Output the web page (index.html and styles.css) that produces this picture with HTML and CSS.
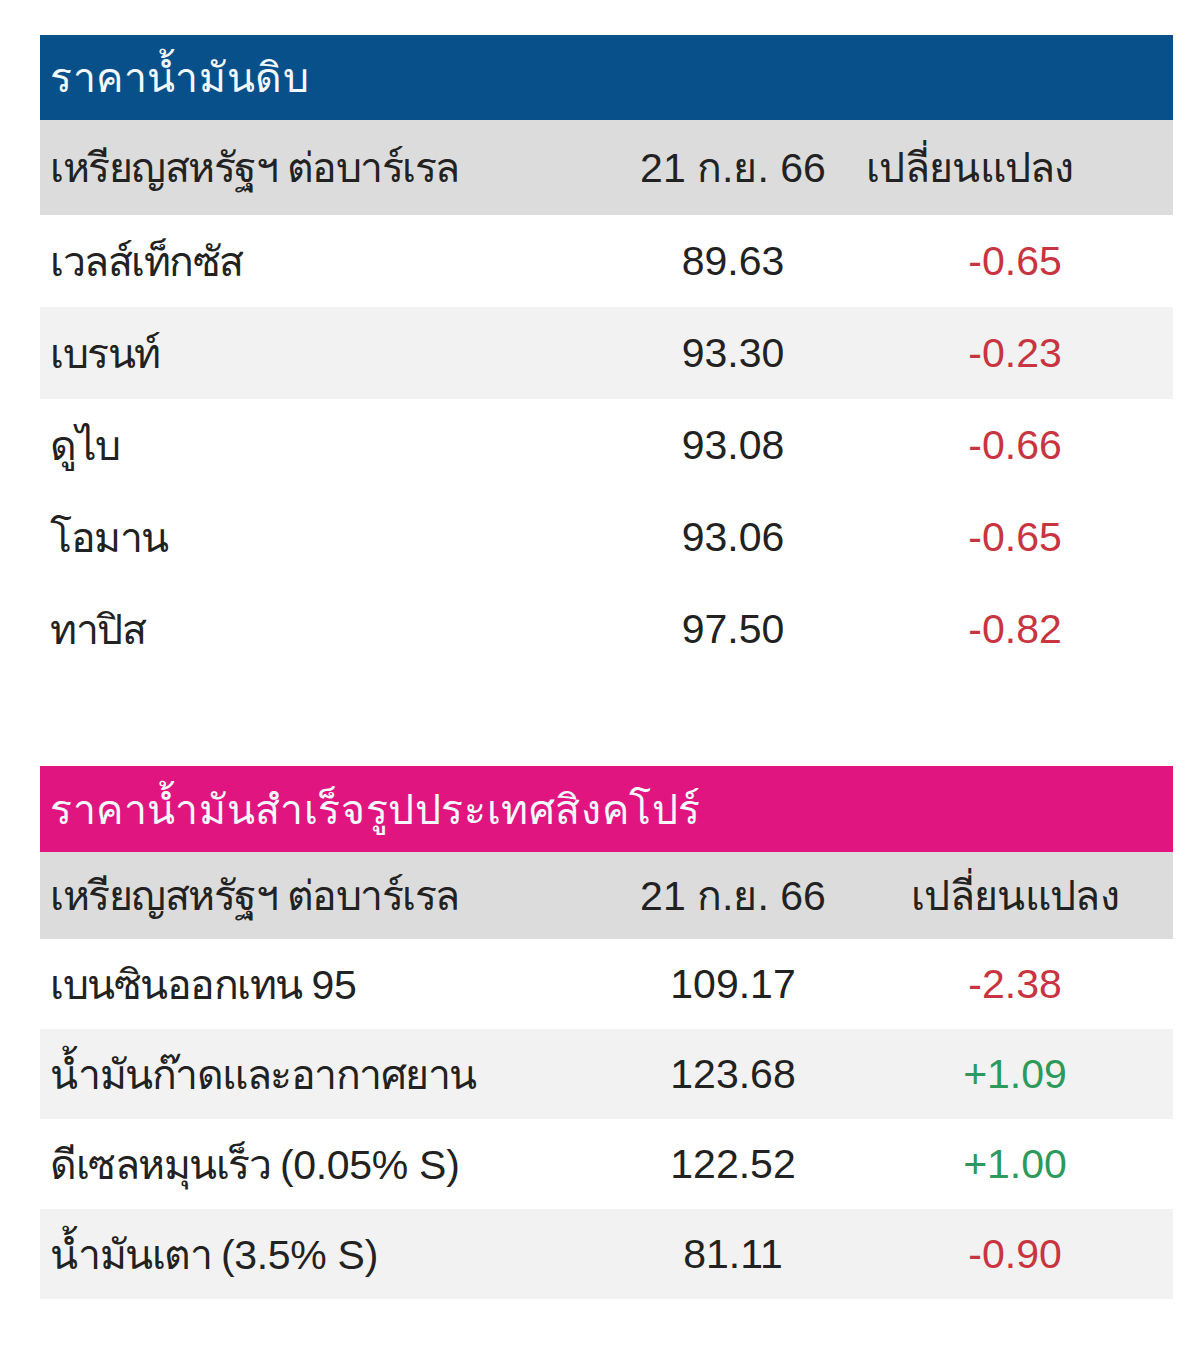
FILE: index.html
```html
<!DOCTYPE html>
<html lang="th">
<head>
<meta charset="utf-8">
<title>ราคาน้ำมัน</title>
<link rel="stylesheet" href="styles.css">
</head>
<body>
<div class="page">
  <table class="oil oil-crude">
    <colgroup><col class="c-name"><col class="c-date"><col class="c-chg"></colgroup>
    <thead>
      <tr class="title"><th colspan="3">ราคาน้ำมันดิบ</th></tr>
      <tr class="head"><th class="name">เหรียญสหรัฐฯ ต่อบาร์เรล</th><th class="date">21 ก.ย. 66</th><th class="chg chg-left">เปลี่ยนแปลง</th></tr>
    </thead>
    <tbody>
      <tr><td class="name">เวลส์เท็กซัส</td><td class="num">89.63</td><td class="chg down">-0.65</td></tr>
      <tr class="alt"><td class="name">เบรนท์</td><td class="num">93.30</td><td class="chg down">-0.23</td></tr>
      <tr><td class="name">ดูไบ</td><td class="num">93.08</td><td class="chg down">-0.66</td></tr>
      <tr><td class="name">โอมาน</td><td class="num">93.06</td><td class="chg down">-0.65</td></tr>
      <tr><td class="name">ทาปิส</td><td class="num">97.50</td><td class="chg down">-0.82</td></tr>
    </tbody>
  </table>

  <table class="oil oil-refined">
    <colgroup><col class="c-name"><col class="c-date"><col class="c-chg"></colgroup>
    <thead>
      <tr class="title"><th colspan="3">ราคาน้ำมันสำเร็จรูปประเทศสิงคโปร์</th></tr>
      <tr class="head"><th class="name">เหรียญสหรัฐฯ ต่อบาร์เรล</th><th class="date">21 ก.ย. 66</th><th class="chg">เปลี่ยนแปลง</th></tr>
    </thead>
    <tbody>
      <tr><td class="name">เบนซินออกเทน <span class="latin">95</span></td><td class="num">109.17</td><td class="chg down">-2.38</td></tr>
      <tr class="alt"><td class="name">น้ำมันก๊าดและอากาศยาน</td><td class="num">123.68</td><td class="chg up">+1.09</td></tr>
      <tr><td class="name">ดีเซลหมุนเร็ว <span class="latin">(0.05% S)</span></td><td class="num">122.52</td><td class="chg up">+1.00</td></tr>
      <tr class="alt"><td class="name">น้ำมันเตา <span class="latin">(3.5% S)</span></td><td class="num">81.11</td><td class="chg down">-0.90</td></tr>
    </tbody>
  </table>
</div>
</body>
</html>
```

FILE: styles.css
```css
html, body {
  margin: 0;
  padding: 0;
  background: #ffffff;
}

.page {
  width: 1133px;
  padding: 35px 0 0 40px;
  font-family: "Liberation Sans", "Noto Sans", "DejaVu Sans", sans-serif;
  color: #222222;
}

.oil {
  width: 1133px;
  border-collapse: collapse;
  table-layout: fixed;
  font-size: 41px;
}

.c-name { width: 569px; }
.c-date { width: 248px; }
.c-chg { width: 316px; }

.oil th, .oil td {
  padding: 0;
  font-weight: normal;
  vertical-align: middle;
  white-space: nowrap;
}

.title th {
  height: 85px;
  text-align: left;
  padding-left: 10px;
  color: #f4f8ff;
  letter-spacing: 0.6px;
}

.oil-crude .title th { background: #07508a; }
.oil-refined .title th { background: #e0157f; height: 86px; }

.head th {
  background: #dcdcdc;
  height: 95px;
}

.oil-refined .head th { height: 87px; }

.name {
  text-align: left;
  padding-left: 10px !important;
  letter-spacing: -1.5px;
}

.name .latin { letter-spacing: -0.3px; }

.date, .num { text-align: center; }
.chg { text-align: center; }
.head .chg { letter-spacing: -0.7px; }
.head .chg-left { text-align: left; padding-left: 9px; }

.oil-crude tbody td { height: 92px; }
.oil-refined tbody td { height: 90px; }

.alt td { background: #f2f2f2; }

.down { color: #c8343f; }
.up { color: #2d9a5c; }

.oil-refined { margin-top: 91px; }
```
